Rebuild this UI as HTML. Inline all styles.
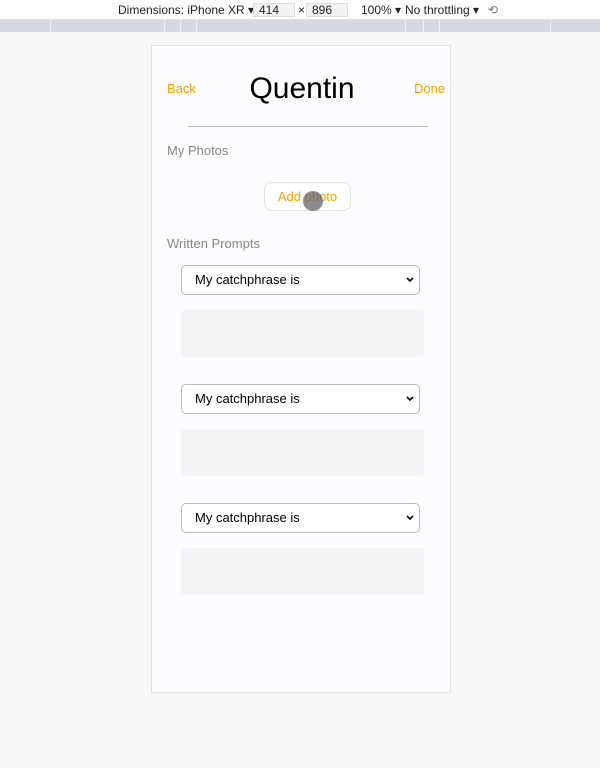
<!DOCTYPE html>
<html><head><style>
*{box-sizing:border-box;margin:0;padding:0}
body{width:600px;height:768px;background:#f7f7f8;font-family:"Liberation Sans",sans-serif;position:relative;overflow:hidden}
.top{position:absolute;left:0;top:0;width:600px;height:20px;background:#fff;border-bottom:1px solid #ddd;font-size:12px;color:#222}
.t{position:absolute;top:3px}
.box{position:absolute;top:3px;height:14px;background:#f3f3f3;border:1px solid #ddd;font-size:12px;padding-left:5px;line-height:12px}
.ruler{position:absolute;left:0;top:20px;width:600px;height:12px;background:#d6d9dd}
.ruler i{position:absolute;top:0;width:1px;height:12px;background:#eceef0}
.phone{position:absolute;left:151px;top:45px;width:300px;height:648px;background:#fcfbfd;border:1px solid #e2e2e2}
.a{position:absolute;color:#f0a500;font-size:13px}
.sel{position:absolute;left:29px;width:239px;height:30px;border:1px solid #bbb;border-radius:5px;background:#fff;font-size:13px;padding-left:13px;line-height:28px;color:#000}
.sel svg{position:absolute;right:5px;top:11px}
.ta{position:absolute;left:29px;width:243px;height:47px;background:#f4f4f5;border-radius:4px}
.lbl{position:absolute;left:15px;color:#888;font-size:13px}
</style></head><body>
<div class="top">
<span class="t" style="left:118px">Dimensions: iPhone XR ▾</span>
<div class="box" style="left:253px;width:42px">414</div>
<span class="t" style="left:298px">×</span>
<div class="box" style="left:306px;width:42px">896</div>
<span class="t" style="left:361px">100% ▾</span>
<span class="t" style="left:405px">No throttling ▾</span>
<span class="t" style="left:488px;color:#777">⟲</span>
</div>
<div class="ruler"><i style="left:50px"></i><i style="left:164px"></i><i style="left:180px"></i><i style="left:196px"></i><i style="left:405px"></i><i style="left:423px"></i><i style="left:439px"></i><i style="left:550px"></i></div>
<div class="phone">
<div class="a" style="left:15px;top:35px">Back</div>
<div style="position:absolute;left:0;width:300px;top:26px;text-align:center;font-size:30px;color:#000">Quentin</div>
<div class="a" style="left:262px;top:35px">Done</div>
<div style="position:absolute;left:36px;top:80px;width:240px;height:1px;background:#bbb"></div>
<div class="lbl" style="top:97px">My Photos</div>
<div style="position:absolute;left:112px;top:136px;width:87px;height:29px;border:1px solid #e2e2e2;border-radius:8px;background:#fff;color:#f0a500;font-size:13px;text-align:center;line-height:27px">Add photo</div>
<div style="position:absolute;left:151px;top:145px;width:20px;height:20px;border-radius:50%;background:rgba(100,100,100,.75)"></div>
<div class="lbl" style="top:190px">Written Prompts</div>
<div class="sel" style="top:219px">My catchphrase is<svg width="8" height="6"><path d="M1 1L4 4L7 1" stroke="#000" stroke-width="1.6" fill="none"/></svg></div>
<div class="ta" style="top:264px"></div>
<div class="sel" style="top:338px">My catchphrase is<svg width="8" height="6"><path d="M1 1L4 4L7 1" stroke="#000" stroke-width="1.6" fill="none"/></svg></div>
<div class="ta" style="top:383px"></div>
<div class="sel" style="top:457px">My catchphrase is<svg width="8" height="6"><path d="M1 1L4 4L7 1" stroke="#000" stroke-width="1.6" fill="none"/></svg></div>
<div class="ta" style="top:502px"></div>
</div>
</body></html>
